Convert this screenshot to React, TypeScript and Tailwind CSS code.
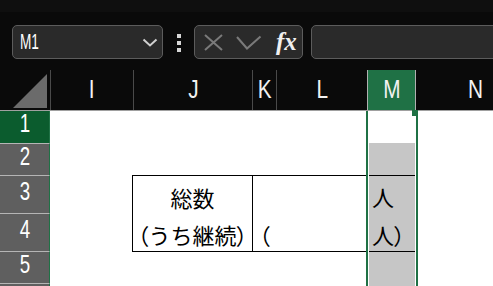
import React from "react";

const rh =
  "flex items-center justify-center pb-[8px] border-r border-r-[#1f7145] text-white";
const digit = "inline-block text-[25px] leading-[24px] scale-x-75";
const cjk = "font-['Noto_Sans_CJK_JP',sans-serif] text-[22px] leading-[22px] text-black";
const paren = "[font-feature-settings:'palt']";
const colHead = "flex items-center justify-center border-l border-[#4a4a4a]";
const letter = "inline-block text-[26px] leading-none scale-x-[0.8] pb-[2px]";

function MCell({
  children,
  gray = true,
  top = false,
  handle = false,
}: {
  children?: React.ReactNode;
  gray?: boolean;
  top?: boolean;
  handle?: boolean;
}) {
  return (
    <div className="relative border-x-2 border-[#1f7145] px-[1px]">
      <div
        className={`h-full flex items-end pb-[6px] pl-[3px] ${gray ? "bg-[#c6c6c6]" : "bg-white"} ${
          top ? "border-t border-black" : ""
        }`}
      >
        {children}
      </div>
      {handle && (
        <div className="absolute right-[-2px] top-[-1px] w-[6px] h-[6px] bg-[#1f7145]" />
      )}
    </div>
  );
}

export default function App() {
  return (
    <div className="w-[493px] h-[286px] overflow-hidden bg-[#0a0a0a] font-['Liberation_Sans',Arial,sans-serif]">
      <div className="h-[12px] bg-[#0f0f0f]" />
      <div className="h-[58px] flex items-start pt-[13px] overflow-hidden">
        <div className="ml-[12px] w-[151px] h-[34px] shrink-0 rounded-[5px] border border-[#5c5c5c] bg-[#2a2a2a] flex items-center justify-between pl-[7px] pr-[4px]">
          <span className="inline-block origin-left scale-x-[0.62] text-[22px] leading-none text-white">
            M1
          </span>
          <svg width="16" height="9" viewBox="0 0 16 9">
            <path d="M1.5 1.5 L8 7.5 L14.5 1.5" stroke="#d0d0d0" strokeWidth="2" fill="none" />
          </svg>
        </div>
        <div className="ml-[14px] mt-[9px] flex flex-col gap-[3px] shrink-0">
          <div className="w-[4px] h-[4px] bg-[#d6d6d6]" />
          <div className="w-[4px] h-[4px] bg-[#d6d6d6]" />
          <div className="w-[4px] h-[4px] bg-[#d6d6d6]" />
        </div>
        <div className="ml-[13px] w-[109px] h-[34px] shrink-0 rounded-[5px] border border-[#5c5c5c] bg-[#2a2a2a] flex items-center">
          <svg className="ml-[9px]" width="19" height="17" viewBox="0 0 19 17">
            <path d="M1 1 L18 16 M18 1 L1 16" stroke="#7a7a7a" strokeWidth="2" fill="none" />
          </svg>
          <svg className="ml-[13px]" width="26" height="15" viewBox="0 0 26 15">
            <path d="M1 2 L11 13.5 L24.5 1.5" stroke="#7a7a7a" strokeWidth="2" fill="none" />
          </svg>
          <span className="ml-[14px] font-['Liberation_Serif',serif] italic font-semibold text-[25px] leading-none text-[#f0f0f0] pb-[2px]">
            fx
          </span>
        </div>
        <div className="ml-[8px] w-[200px] h-[34px] shrink-0 rounded-[5px] border border-[#5c5c5c] bg-[#2a2a2a]" />
      </div>

      {/* column headers */}
      <div className="grid grid-cols-[50px_83px_119px_24px_91px_49px_119px] h-[41px] border-b border-[#a0a0a0] text-[#f2f2f2]">
        <div className="relative">
          <svg width="50" height="40" viewBox="0 0 50 40">
            <polygon points="13,38 47,38 47,4" fill="#6b6b6b" />
          </svg>
        </div>
        <div className={colHead}>
          <span className={letter}>I</span>
        </div>
        <div className={colHead}>
          <span className={letter}>J</span>
        </div>
        <div className={colHead}>
          <span className={letter}>K</span>
        </div>
        <div className={colHead}>
          <span className={letter}>L</span>
        </div>
        <div className="flex items-center justify-center bg-[#1f7145] border-x border-[#b0b0b0]">
          <span className={letter}>M</span>
        </div>
        <div className="flex items-center justify-center">
          <span className={letter}>N</span>
        </div>
      </div>

      {/* body */}
      <div className="grid grid-cols-[50px_82px_121px_24px_89px_52px_119px] grid-rows-[32px_32px_38px_38px_32px_32px] bg-white">
        {/* row 1 */}
        <div className={`${rh} bg-[#0b5c2e]`}>
          <span className={digit}>1</span>
        </div>
        <div />
        <div />
        <div />
        <div />
        <MCell gray={false} handle />
        <div />

        {/* row 2 */}
        <div className={`${rh} bg-[#5f5f5f] border-t border-t-[#b5b5b5]`}>
          <span className={digit}>2</span>
        </div>
        <div />
        <div />
        <div />
        <div />
        <MCell />
        <div />

        {/* row 3 */}
        <div className={`${rh} bg-[#5f5f5f] border-t border-t-[#b5b5b5]`}>
          <span className={digit}>3</span>
        </div>
        <div />
        <div className={`border-l border-r border-t border-black flex items-end justify-center pb-[5px] ${cjk}`}>
          総数
        </div>
        <div className="col-span-2 border-t border-black" />
        <MCell top>
          <span className={cjk}>人</span>
        </MCell>
        <div />

        {/* row 4 */}
        <div className={`${rh} bg-[#5f5f5f] border-t border-t-[#b5b5b5]`}>
          <span className={digit}>4</span>
        </div>
        <div />
        <div className={`border-l border-r border-black flex items-end justify-center pb-[6px] ${cjk}`}>
          <span className={paren}>（</span>うち継続<span className={paren}>）</span>
        </div>
        <div className={`flex items-end pb-[6px] pl-[6px] ${cjk}`}>
          <span className={paren}>（</span>
        </div>
        <div />
        <MCell>
          <span className={cjk}>
            人<span className={paren}>）</span>
          </span>
        </MCell>
        <div />

        {/* row 5 */}
        <div className={`${rh} bg-[#5f5f5f] border-t border-t-[#b5b5b5]`}>
          <span className={digit}>5</span>
        </div>
        <div />
        <div className="border-t border-black" />
        <div className="border-t border-black" />
        <div className="border-t border-black" />
        <MCell top />
        <div />

        {/* row 6 */}
        <div className="bg-[#5f5f5f] border-t border-t-[#b5b5b5] border-r border-r-[#1f7145]" />
        <div />
        <div />
        <div />
        <div />
        <MCell />
        <div />
      </div>
    </div>
  );
}
